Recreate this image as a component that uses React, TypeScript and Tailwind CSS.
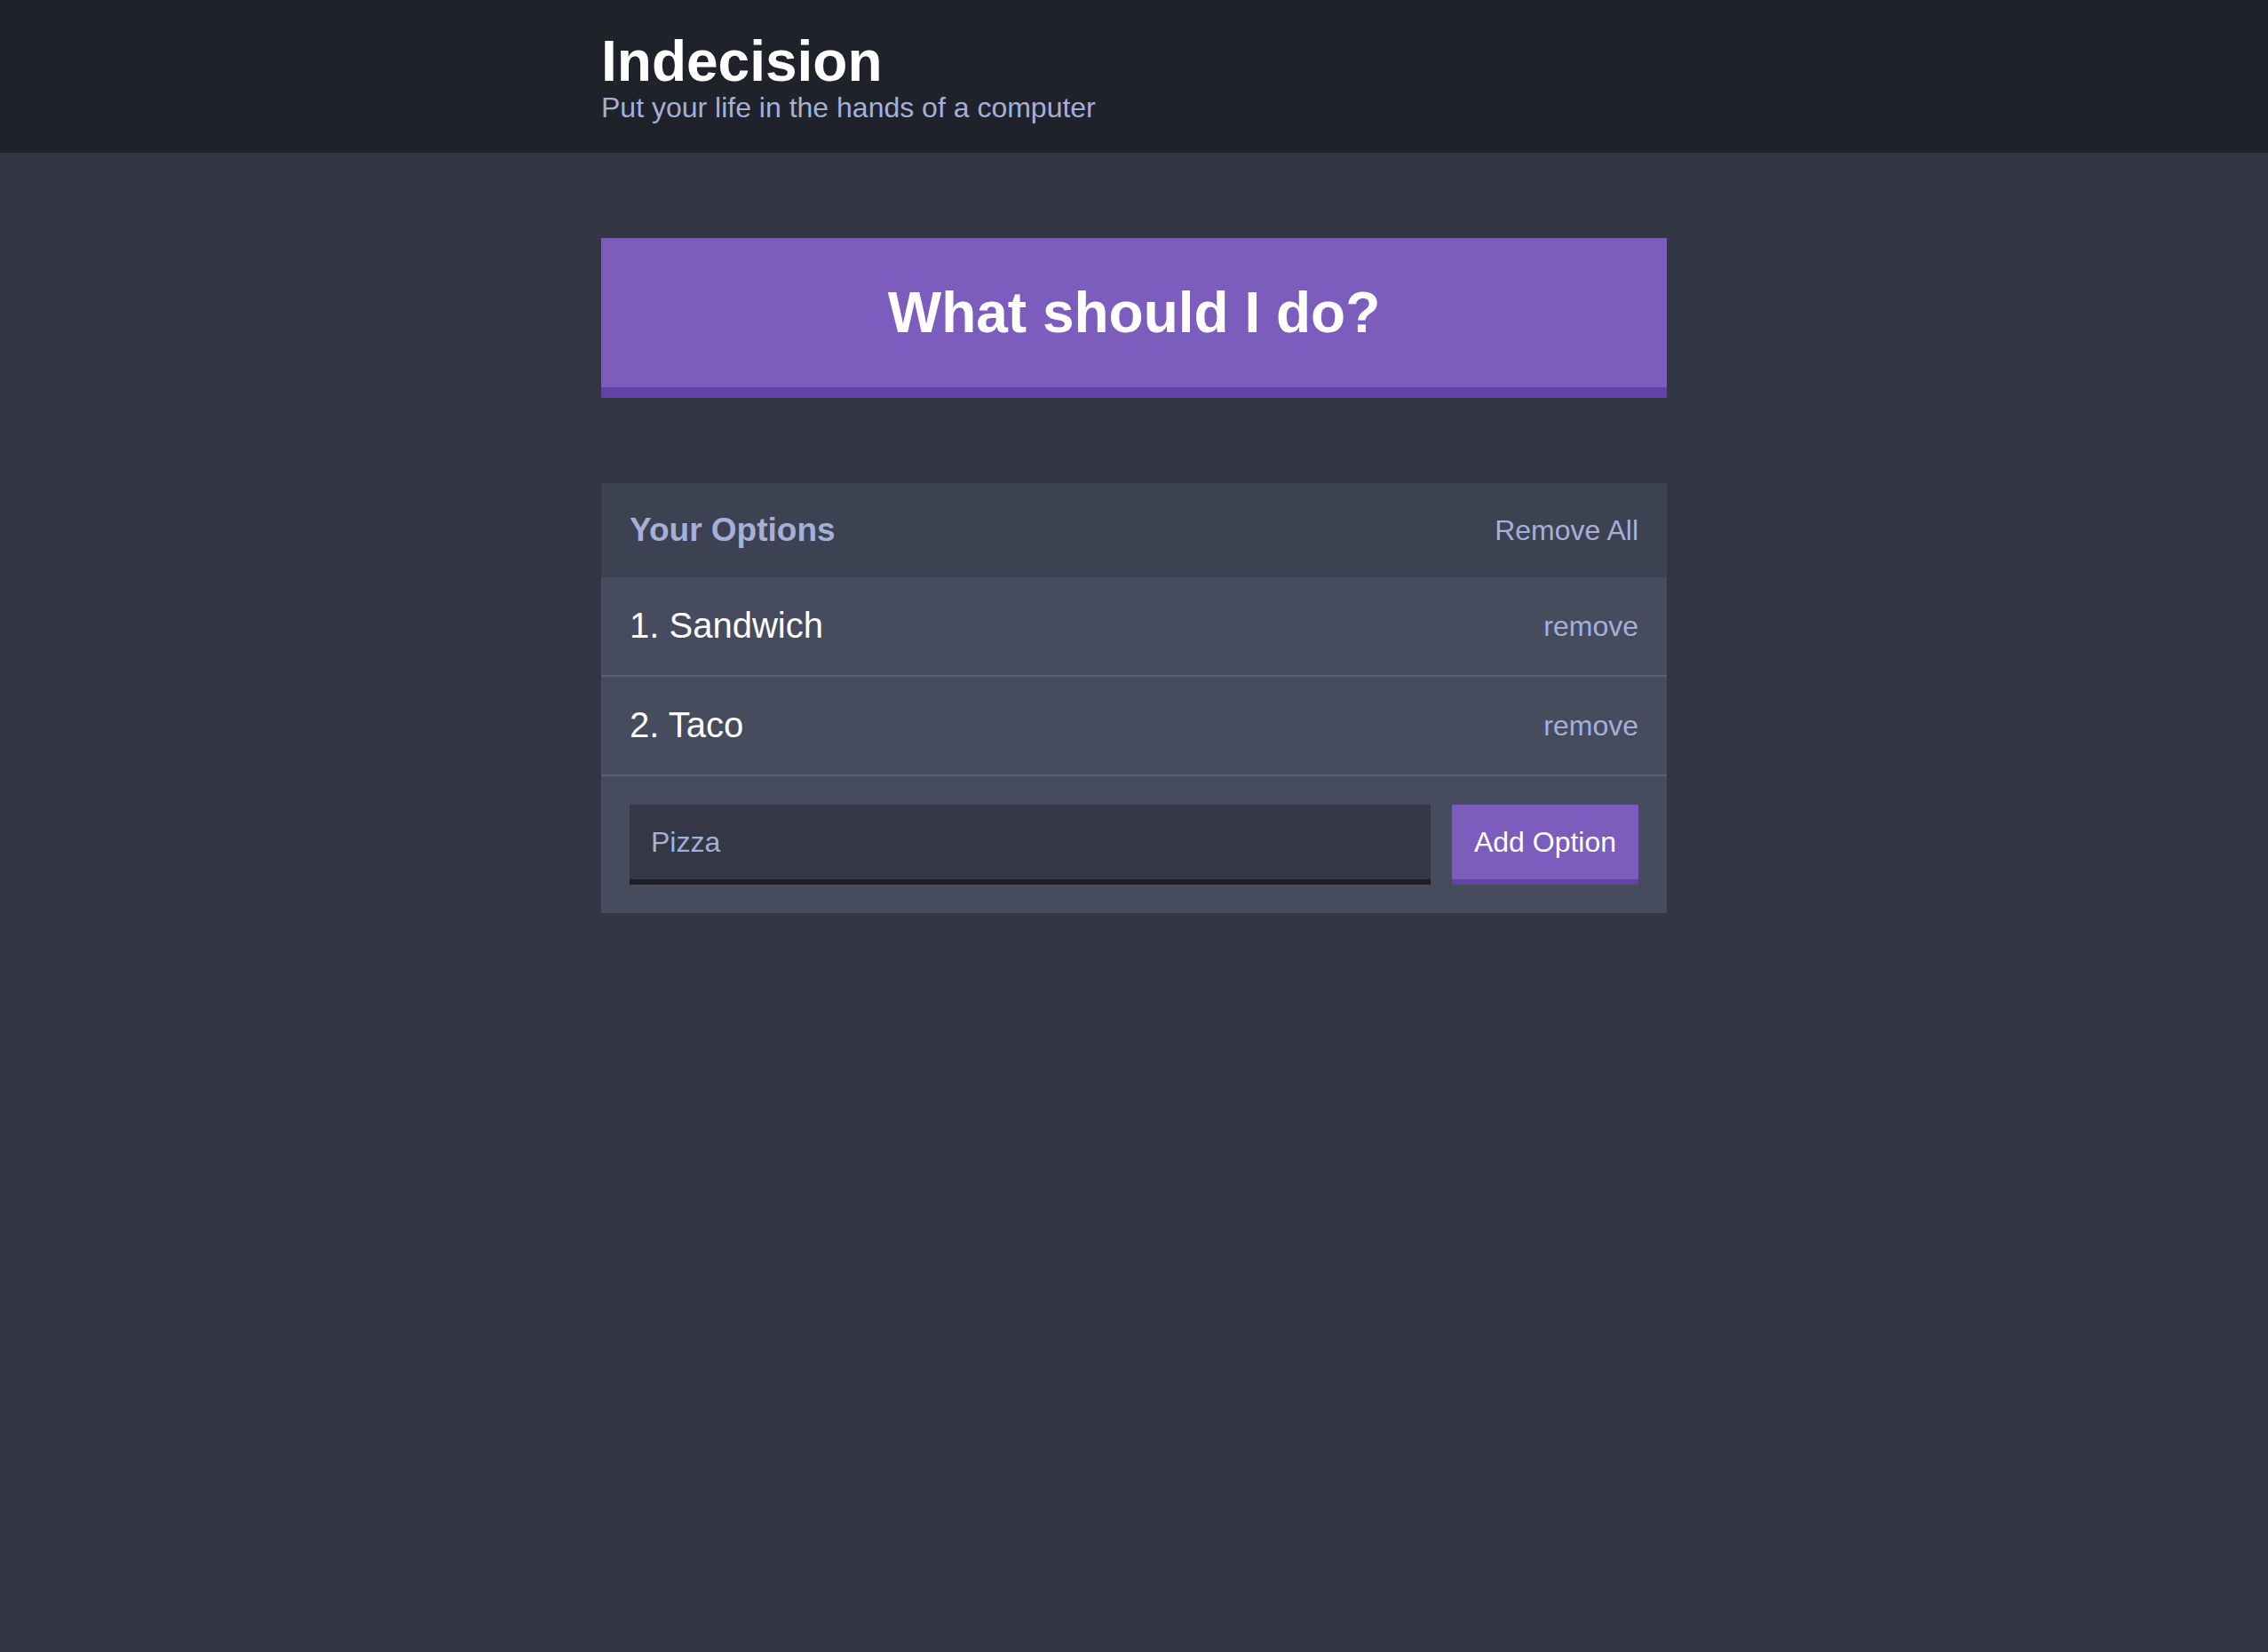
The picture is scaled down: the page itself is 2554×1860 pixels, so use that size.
import React, { useState } from 'react';

const Header: React.FC<{ title: string; subtitle: string }> = ({ title, subtitle }) => (
  <header className="h-[172px] bg-[#20222b] pt-[37px]">
    <div className="mx-auto w-[1200px]">
      <h1 className="text-[64px] font-bold leading-none text-white">{title}</h1>
      <h2 className="mt-[1px] text-[32px] font-normal leading-[1.2] text-[#a5afd7]">{subtitle}</h2>
    </div>
  </header>
);

interface OptionProps {
  text: string;
  index: number;
  onRemove: (text: string) => void;
}

const Option: React.FC<OptionProps> = ({ text, index, onRemove }) => (
  <div className="flex h-[112px] items-center justify-between border-b-2 border-[#5b627b] bg-[#464b5e] px-8">
    <p className="mb-[3px] text-[40px] leading-none text-white">
      {index}. {text}
    </p>
    <button onClick={() => onRemove(text)} className="text-[32px] leading-none text-[#a5afd7]">
      remove
    </button>
  </div>
);

const App: React.FC = () => {
  const [options, setOptions] = useState<string[]>(['Sandwich', 'Taco']);
  const [draft, setDraft] = useState('Pizza');

  const handleRemove = (text: string) => {
    setOptions(options.filter((option) => option !== text));
  };

  const handleAdd = (e: React.FormEvent) => {
    e.preventDefault();
    const value = draft.trim();
    if (!value || options.includes(value)) return;
    setOptions([...options, value]);
    setDraft('');
  };

  const handlePick = () => {
    if (options.length === 0) return;
    const pick = options[Math.floor(Math.random() * options.length)];
    alert(pick);
  };

  return (
    <div className="min-h-screen bg-[#333745] font-['Liberation_Sans',Arial,Helvetica,sans-serif]">
      <Header title="Indecision" subtitle="Put your life in the hands of a computer" />

      <main className="mx-auto w-[1200px] pt-[96px]">
        {/* Action */}
        <button
          onClick={handlePick}
          className="h-[180px] w-full border-b-[12px] border-[#6243a5] bg-[#7c5cbd] text-[64px] font-bold leading-none text-white"
        >
          What should I do?
        </button>

        {/* Options widget */}
        <div className="mt-[96px] bg-[#464b5e]">
          <div className="flex h-[106px] items-center justify-between bg-[#3c4251] px-8">
            <h3 className="mb-[1px] text-[37px] font-bold leading-none text-[#a5afd7]">Your Options</h3>
            <button onClick={() => setOptions([])} className="text-[32px] leading-none text-[#a5afd7]">
              Remove All
            </button>
          </div>

          {options.map((option, i) => (
            <Option key={option} text={option} index={i + 1} onRemove={handleRemove} />
          ))}

          <form onSubmit={handleAdd} className="flex gap-6 p-8">
            <input
              type="text"
              value={draft}
              onChange={(e) => setDraft(e.target.value)}
              className="h-[90px] flex-1 border-b-[6px] border-[#1d1f27] bg-[#343745] px-[24px] text-[32px] text-[#a5afd7] outline-none"
            />
            <button
              type="submit"
              className="h-[90px] w-[210px] border-b-[6px] border-[#6243a5] bg-[#7c5cbd] text-[32px] text-white"
            >
              Add Option
            </button>
          </form>
        </div>
      </main>
    </div>
  );
};

export default App;
